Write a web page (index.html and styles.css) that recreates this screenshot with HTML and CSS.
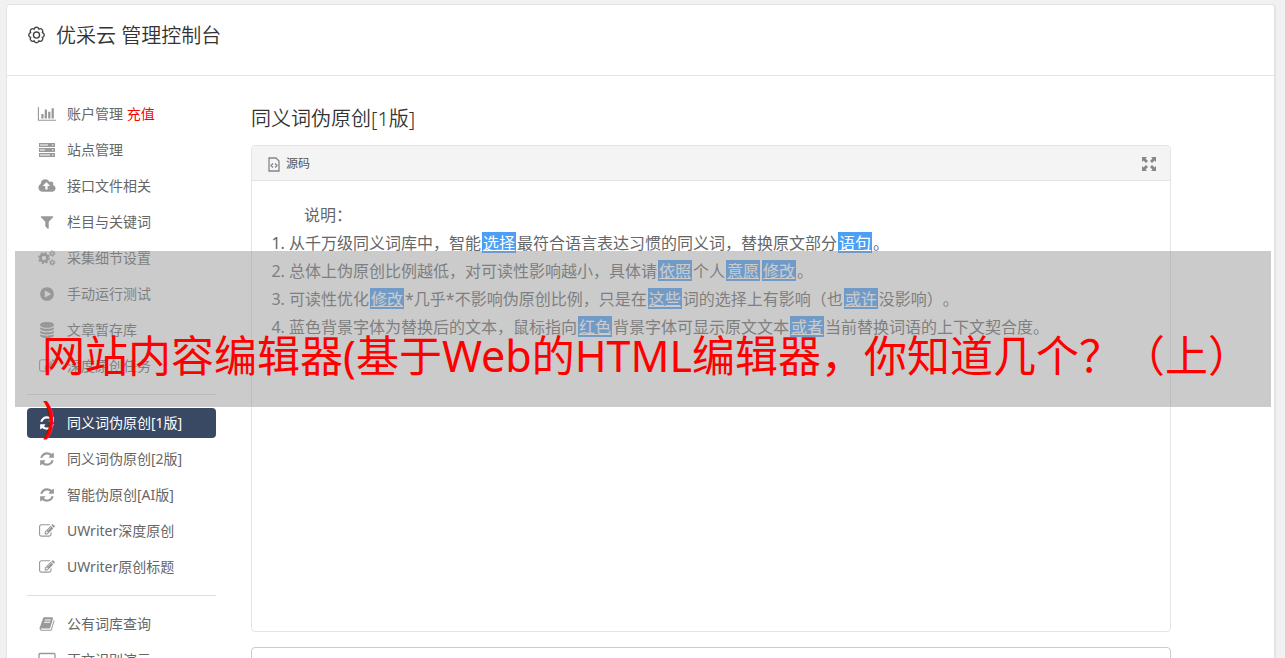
FILE: index.html
```html
<!DOCTYPE html>
<html lang="zh-CN">
<head>
<meta charset="utf-8">
<title>优采云 管理控制台</title>
<link rel="stylesheet" href="styles.css">
</head>
<body>
<svg class="sprite" aria-hidden="true">
  <symbol id="chart" viewBox="0 0 2048 1792"><path d="M640 896v512h-256v-512h256zm384-512v1024h-256v-1024h256zm1024 1152v128h-2048v-1536h128v1408h1920zm-640-896v768h-256v-768h256zm384-384v1152h-256v-1152h256z"/></symbol>
  <symbol id="server" viewBox="0 0 18 16"><path fill-rule="evenodd" d="M1 1h16v4H1zM2 2.500v1h8v-1zM14 2.500v1h1.500v-1zM1 6h16v4H1zM2 7.500v1h5v-1zM14 7.500v1h1.500v-1zM1 11h16v4H1zM2 12.500v1h10v-1zM14 12.500v1h1.500v-1z"/></symbol>
  <symbol id="cloud" viewBox="0 0 1920 1792"><path d="M1280 864q0-14-9-23l-352-352q-9-9-23-9t-23 9l-351 351q-10 12-10 24 0 14 9 23t23 9h224v352q0 13 9.500 22.500t22.500 9.500h192q13 0 22.500-9.500t9.500-22.500v-352h224q13 0 22.500-9.500t9.500-22.500zm640 288q0 159-112.500 271.500t-271.500 112.500h-1088q-185 0-316.500-131.500t-131.500-316.500q0-130 70-240t188-165q-2-30-2-43 0-212 150-362t362-150q156 0 285.500 87t188.500 231q71-62 166-62 106 0 181 75t75 181q0 76-41 138 130 31 213.500 135.500t83.500 238.500z"/></symbol>
  <symbol id="filter" viewBox="0 0 1792 1792"><path d="M1595 295q17 41-14 70l-493 493v742q0 42-39 59-13 5-25 5-27 0-45-19l-256-256q-19-19-19-45v-486l-493-493q-31-29-14-70 17-39 59-39h1280q42 0 59 39z"/></symbol>
  <symbol id="cogs" viewBox="0 0 18 16"><g fill="none" stroke="currentColor"><circle cx="6" cy="8" r="3.500" stroke-width="2.600"/><circle cx="6" cy="8" r="5.200" stroke-width="1.500" stroke-dasharray="2.040 2.040"/><circle cx="14.300" cy="3.500" r="1.700" stroke-width="1.300"/><circle cx="14.300" cy="3.500" r="2.700" stroke-width="1" stroke-dasharray="1.410 1.410"/><circle cx="14.300" cy="12.500" r="1.700" stroke-width="1.300"/><circle cx="14.300" cy="12.500" r="2.700" stroke-width="1" stroke-dasharray="1.410 1.410"/></g></symbol>
  <symbol id="play" viewBox="0 0 1792 1792"><path d="M896 128q209 0 385.500 103t279.500 279.500 103 385.500-103 385.500-279.500 279.500-385.500 103-385.500-103-279.500-279.500-103-385.500 103-385.500 279.500-279.500 385.500-103zm384 823q32-18 32-55t-32-55l-544-320q-31-19-64-1-32 19-32 56v640q0 37 32 56 16 8 32 8 17 0 32-9z"/></symbol>
  <symbol id="database" viewBox="0 0 1792 1792"><path d="M896 768q237 0 443-43t325-127v170q0 69-103 128t-280 93.500-385 34.500-385-34.500-280-93.500-103-128v-170q119 84 325 127t443 43zm0 768q237 0 443-43t325-127v170q0 69-103 128t-280 93.500-385 34.500-385-34.500-280-93.500-103-128v-170q119 84 325 127t443 43zm0-384q237 0 443-43t325-127v170q0 69-103 128t-280 93.500-385 34.500-385-34.500-280-93.500-103-128v-170q119 84 325 127t443 43zm0-1152q208 0 385 34.500t280 93.500 103 128v128q0 69-103 128t-280 93.500-385 34.500-385-34.500-280-93.500-103-128v-128q0-69 103-128t280-93.500 385-34.500z"/></symbol>
  <symbol id="edit" viewBox="0 0 1792 1792"><path d="M888 1184l116-116-152-152-116 116v56h96v96h56zm440-720q-16-16-33 1l-350 350q-17 17-1 33t33-1l350-350q17-17 1-33zm80 594v190q0 119-84.500 203.500t-203.500 84.500h-832q-119 0-203.500-84.500t-84.500-203.500v-832q0-119 84.500-203.500t203.500-84.500h832q63 0 117 25 15 7 18 23 3 17-9 29l-49 49q-14 14-32 8-23-6-45-6h-832q-66 0-113 47t-47 113v832q0 66 47 113t113 47h832q66 0 113-47t47-113v-126q0-13 9-22l64-64q15-15 35-7t20 29zm-96-738l288 288-672 672h-288v-288zm444 132l-92 92-288-288 92-92q28-28 68-28t68 28l152 152q28 28 28 68t-28 68z"/></symbol>
  <symbol id="refresh" viewBox="0 0 1792 1792"><path d="M1639 1056q0 5-1 7-64 268-268 434.500t-478 166.500q-146 0-282.500-55t-243.500-157l-129 129q-19 19-45 19t-45-19-19-45v-448q0-26 19-45t45-19h448q26 0 45 19t19 45-19 45l-137 137q71 66 161 102t187 36q134 0 250-65t186-179q11-17 53-117 8-23 30-23h192q13 0 22.500 9.500t9.500 22.500zm25-800v448q0 26-19 45t-45 19h-448q-26 0-45-19t-19-45 19-45l138-138q-148-137-349-137-134 0-250 65t-186 179q-11 17-53 117-8 23-30 23h-199q-13 0-22.500-9.500t-9.500-22.500v-7q65-268 270-434.500t480-166.500q146 0 284 55.500t245 156.500l130-129q19-19 45-19t45 19 19 45z"/></symbol>
  <symbol id="book" viewBox="0 0 1792 1792"><path d="M1703 478q40 57 18 129l-275 906q-19 64-76.500 107.500t-122.500 43.500h-923q-77 0-148.500-53.500t-99.500-131.500q-24-67-2-127 0-4 3-27t4-37q1-8-3-21.500t-3-19.500q2-11 8-21t16.500-23.500 16.500-23.500q23-38 45-91.500t30-91.500q3-10 .5-30t-.5-28q3-11 17-28t17-23q21-36 42-92t25-90q1-9-2.500-32t.5-28q4-13 22-30.500t22-22.500q19-26 42.500-84.500t27.500-96.500q1-8-3-25.500t-2-26.500q2-8 9-18t18-23 17-21q8-12 16.500-30.500t15-35 16-36 19.500-32 26.500-23.500 36-11.500 47.500 5.500l-1 3q38-9 51-9h761q74 0 114 56t18 130l-274 906q-36 119-71.500 153.500t-128.500 34.500h-869q-27 0-38 15-11 16-1 43 24 70 144 70h923q29 0 56-15.500t35-41.500l300-987q7-22 5-57 38 15 59 43zm-1064 2q-4 13 2 22.500t20 9.500h608q13 0 25.500-9.500t16.500-22.500l21-64q4-13-2-22.500t-20-9.500h-608q-13 0-25.500 9.500t-16.500 22.500zm-83 256q-4 13 2 22.500t20 9.500h608q13 0 25.500-9.500t16.500-22.500l21-64q4-13-2-22.500t-20-9.500h-608q-13 0-25.500 9.500t-16.500 22.500z"/></symbol>
  <symbol id="screen" viewBox="0 0 18 16"><path d="M2 1.500h14a1 1 0 0 1 1 1v11H1v-11a1 1 0 0 1 1-1z" fill="none" stroke="currentColor" stroke-width="1.300"/></symbol>
</svg>

<div class="page">
  <div class="card">
    <header class="card-head">
      <svg class="gear" viewBox="0 0 18 18" aria-hidden="true"><path d="M14.600 11.300A2.400 2.400 0 0 1 11.300 14.600A2.400 2.400 0 0 1 6.700 14.600A2.400 2.400 0 0 1 3.400 11.300A2.400 2.400 0 0 1 3.400 6.700A2.400 2.400 0 0 1 6.700 3.400A2.400 2.400 0 0 1 11.300 3.400A2.400 2.400 0 0 1 14.600 6.700A2.400 2.400 0 0 1 14.600 11.300z"/><circle cx="9" cy="9" r="2.900"/></svg>
      <h1 class="title">优采云 管理控制台</h1>
    </header>
    <div class="columns">
      <nav class="menu">
        <a class="item" href="#"><svg class="icon"><use href="#chart"/></svg><span>账户管理 <span class="hot">充值</span></span></a>
        <a class="item" href="#"><svg class="icon"><use href="#server"/></svg>站点管理</a>
        <a class="item" href="#"><svg class="icon"><use href="#cloud"/></svg>接口文件相关</a>
        <a class="item" href="#"><svg class="icon"><use href="#filter"/></svg>栏目与关键词</a>
        <a class="item" href="#"><svg class="icon"><use href="#cogs"/></svg>采集细节设置</a>
        <a class="item" href="#"><svg class="icon"><use href="#play"/></svg>手动运行测试</a>
        <a class="item" href="#"><svg class="icon"><use href="#database"/></svg>文章暂存库</a>
        <a class="item" href="#"><svg class="icon"><use href="#edit"/></svg>深度原创任务</a>
        <hr class="rule">
        <a class="item active" href="#" aria-current="page"><svg class="icon"><use href="#refresh"/></svg>同义词伪原创[1版]</a>
        <a class="item" href="#"><svg class="icon"><use href="#refresh"/></svg>同义词伪原创[2版]</a>
        <a class="item" href="#"><svg class="icon"><use href="#refresh"/></svg>智能伪原创[AI版]</a>
        <a class="item" href="#"><svg class="icon"><use href="#edit"/></svg>UWriter深度原创</a>
        <a class="item" href="#"><svg class="icon"><use href="#edit"/></svg>UWriter原创标题</a>
        <hr class="rule">
        <a class="item" href="#"><svg class="icon"><use href="#book"/></svg>公有词库查询</a>
        <a class="item" href="#"><svg class="icon"><use href="#screen"/></svg>正文识别演示</a>
      </nav>
      <main class="main">
        <h2 class="title">同义词伪原创[1版]</h2>
        <section class="editor">
          <div class="toolbar">
            <button class="tool" type="button"><svg class="tool-icon" viewBox="0 0 12 15" aria-hidden="true"><path d="M1 1h7l3 3v10H1zM5 6.500L3 8.500l2 2M7 6.500l2 2-2 2" fill="none" stroke="#858585" stroke-width="1.300"/></svg>源码</button>
            <button class="tool" type="button" aria-label="全屏"><svg class="full-icon" viewBox="0 0 14 14" aria-hidden="true"><path d="M0 0h5L3.500 1.500 6 4 4 6 1.500 3.500 0 5zM14 0v5l-1.500-1.500L10 6 8 4l2.500-2.500L9 0zM0 14V9l1.500 1.500L4 8l2 2-2.500 2.500L5 14zM14 14H9l1.500-1.500L8 10l2-2 2.500 2.500L14 9z" fill="#858585"/></svg></button>
          </div>
          <div class="content">
            <p class="lead">说明：</p>
            <ol class="notes">
              <li>从千万级同义词库中，智能<mark>选择</mark>最符合语言表达习惯的同义词，替换原文部分<mark>语句</mark>。</li>
              <li>总体上伪原创比例越低，对可读性影响越小，具体请<mark>依照</mark>个人<mark>意愿</mark><mark>修改</mark>。</li>
              <li>可读性优化<mark>修改</mark>*几乎*不影响伪原创比例，只是在<mark>这些</mark>词的选择上有影响（也<mark>或许</mark>没影响）。</li>
              <li>蓝色背景字体为替换后的文本，鼠标指向<mark>红色</mark>背景字体可显示原文文本<mark>或者</mark>当前替换词语的上下文契合度。</li>
            </ol>
          </div>
        </section>
        <textarea class="source" aria-label="原文"></textarea>
      </main>
    </div>
  </div>
  <div class="banner">网站内容编辑器(基于Web的HTML编辑器，你知道几个？（上）<br>)</div>
</div>
</body>
</html>
```
FILE: styles.css
```css
* { box-sizing: border-box; }
body {
  margin: 0;
  background: #f1f1f1;
  color: #666;
  font: 14px/20px "Noto Sans", "Noto Sans CJK SC", sans-serif;
  text-spacing-trim: space-all;
}
.sprite { display: none; }
.page {
  position: relative;
  height: 100vh;
  overflow: hidden;
  padding: 4px 9px 0 6px;
}
.card {
  background: #fff;
  border: 1px solid #e4e4e4;
  border-right-width: 2px;
  border-radius: 4px;
}
.card-head {
  display: flex;
  align-items: flex-start;
  gap: 10px;
  padding: 16px 20px 24px;
  border-bottom: 1px solid #e4e4e4;
}
.gear {
  width: 19px;
  height: 28px;
  fill: none;
  stroke: #444;
  stroke-width: 1.3;
}
.title {
  margin: 0;
  color: #333;
  font-size: 20px;
  line-height: 30px;
  font-weight: 350;
}
.columns {
  display: flex;
  gap: 35px;
  padding: 23px 103px 20px 20px;
}
.menu { flex: none; width: 189px; }
.item {
  display: flex;
  align-items: center;
  gap: 10px;
  height: 30px;
  margin-bottom: 6px;
  padding: 0 10px;
  border-radius: 4px;
  color: #666;
  text-decoration: none;
  white-space: nowrap;
}
.icon {
  width: 20px;
  height: 16px;
  color: #999;
  fill: currentColor;
}
.hot { color: #f00; }
.active { background: #3a4963; color: #fff; }
.active .icon { color: #fff; }
.rule {
  height: 1px;
  margin: 13px 0;
  border: 0;
  background: #ddd;
}
.main {
  flex: 1;
  min-width: 0;
  padding-top: 5px;
}
.editor {
  min-height: 487px;
  margin-top: 11px;
  border: 1px solid #e4e4e4;
  border-radius: 4px;
}
.toolbar {
  display: flex;
  justify-content: space-between;
  height: 35px;
  padding: 2px 14px 0;
  background: #f4f4f4;
  border-bottom: 1px solid #e4e4e4;
  border-radius: 4px 4px 0 0;
}
.tool {
  display: flex;
  align-items: center;
  gap: 6px;
  padding: 0 0 0 2px;
  border: 0;
  background: none;
  color: #555;
  font: inherit;
  font-size: 12px;
}
.tool-icon { width: 12px; height: 15px; }
.full-icon { width: 14px; height: 14px; }
.content {
  padding: 20px;
  font-size: 16px;
  line-height: 28px;
}
.lead { margin: 0; text-indent: 32px; }
.notes { margin: 0; padding-left: 17px; }
mark {
  display: inline-block;
  height: 21px;
  margin: 0 1px;
  padding: 0 1px;
  background: #4b9ff5;
  color: #fff;
  line-height: 22px;
  text-decoration: underline;
}
.source {
  display: block;
  width: 100%;
  height: 60px;
  margin-top: 15px;
  border: 1px solid #ccc;
  border-radius: 4px;
  resize: none;
}
.banner {
  position: absolute;
  top: 251px;
  left: 15px;
  right: 14px;
  height: 156px;
  padding: 75px 0 0 27px;
  background: rgba(151, 151, 151, 0.5);
  color: #f00;
  font-size: 43px;
  line-height: 60px;
  white-space: nowrap;
}
```
